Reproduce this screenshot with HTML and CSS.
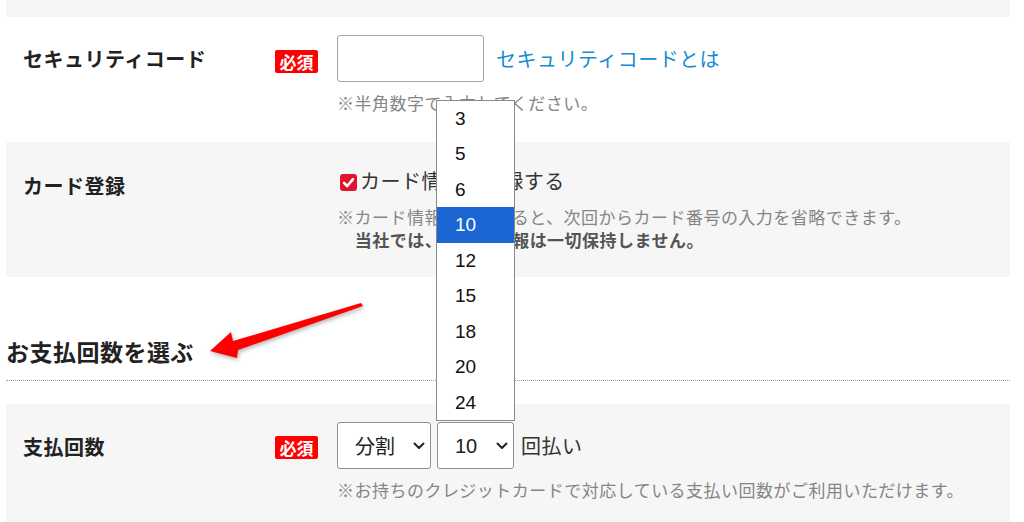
FILE: index.html
```html
<!DOCTYPE html>
<html lang="ja">
<head>
  <meta charset="UTF-8">
  <meta name="viewport" content="width=device-width, initial-scale=1.0">
  <title>お支払い情報</title>
  <link rel="stylesheet" href="styles.css">
</head>
<body>

<div class="page">
  <div class="row-top"></div>

  <!-- セキュリティコード -->
  <div class="row row-code">
    <div class="row-label">セキュリティコード</div>
    <div class="row-badge"><span class="badge">必須</span></div>
    <div class="row-field">
      <div class="field-line">
        <input type="text" class="text-input" name="code">
        <a href="#" class="link">セキュリティコードとは</a>
      </div>
      <p class="note">※半角数字で入力してください。</p>
    </div>
  </div>

  <!-- カード登録 -->
  <div class="row row-gray row-card">
    <div class="row-label">カード登録</div>
    <div class="row-badge"></div>
    <div class="row-field">
      <label class="check">
        <span class="check-box">
          <svg width="17" height="17" viewBox="0 0 17 17">
            <rect x="0" y="0" width="17" height="17" rx="3" fill="#e3132d"/>
            <path d="M4 8.8 L7.2 12 L13 5.2" fill="none" stroke="#fff" stroke-width="2.6" stroke-linecap="round" stroke-linejoin="round"/>
          </svg>
        </span>
        カード情報を登録する
      </label>
      <p class="note">※カード情報を登録すると、次回からカード番号の入力を省略できます。<strong>当社では、カード情報は一切保持しません。</strong></p>
    </div>
  </div>

  <!-- 見出し -->
  <div class="section-head">
    <h2>お支払回数を選ぶ</h2>
    <svg class="arrow" width="170" height="72" viewBox="0 0 170 72">
      <polygon points="10,57 31,38 33,47 161,9 163,12 38,56 37,64" fill="#ff0000"/>
    </svg>
  </div>

  <!-- 支払回数 -->
  <div class="row row-gray row-pay">
    <div class="row-label">支払回数</div>
    <div class="row-badge"><span class="badge">必須</span></div>
    <div class="row-field">
      <div class="field-line field-line-pay">
        <div class="select-wrap select-type">
          <select class="select">
            <option>分割</option>
          </select>
          <svg class="chevron" width="12" height="8" viewBox="0 0 12 8">
            <path d="M1.5 1.5 L6 6 L10.5 1.5" fill="none" stroke="#222" stroke-width="2" stroke-linecap="round" stroke-linejoin="round"/>
          </svg>
        </div>
        <div class="select-wrap select-count">
          <select class="select">
            <option>10</option>
          </select>
          <svg class="chevron" width="12" height="8" viewBox="0 0 12 8">
            <path d="M1.5 1.5 L6 6 L10.5 1.5" fill="none" stroke="#222" stroke-width="2" stroke-linecap="round" stroke-linejoin="round"/>
          </svg>
          <ul class="dropdown">
            <li>3</li>
            <li>5</li>
            <li>6</li>
            <li class="selected">10</li>
            <li>12</li>
            <li>15</li>
            <li>18</li>
            <li>20</li>
            <li>24</li>
          </ul>
        </div>
        <span class="unit">回払い</span>
      </div>
      <p class="note">※お持ちのクレジットカードで対応している支払い回数がご利用いただけます。</p>
    </div>
  </div>
</div>

</body>
</html>
```

FILE: styles.css
```css
/* 全体 */
body {
  margin: 0;
  background: #fff;
  font-family: "Noto Sans CJK JP", sans-serif;
  color: #333;
  letter-spacing: 0.03em;
  overflow: hidden;
}

.page {
  margin: 0 14px 0 6px;
}

.row-top {
  height: 17px;
  background: #f6f6f6;
}

/* 行 */
.row {
  display: grid;
  grid-template-columns: 252px 62px 1fr;
  padding-left: 17px;
}

.row-gray {
  background: #f6f6f6;
}

.row-label {
  font-size: 20px;
  font-weight: bold;
  color: #222;
  line-height: 30px;
}

.badge {
  display: inline-block;
  width: 43px;
  height: 23px;
  line-height: 23px;
  text-align: center;
  background: #ff0000;
  color: #fff;
  font-size: 17px;
  font-weight: bold;
  letter-spacing: 0;
  border-radius: 2px;
}

.field-line {
  display: flex;
  align-items: center;
  gap: 12px;
}

.note {
  margin: 9px 0 0;
  font-size: 17px;
  line-height: 23px;
  color: #858585;
}

.note strong {
  display: block;
  padding-left: 1.05em;
  color: #555;
}

/* セキュリティコード */
.row-code {
  padding-top: 18px;
  padding-bottom: 28px;
}

.row-code .row-label {
  padding-top: 9px;
}

.row-code .badge {
  margin-top: 15px;
}

.text-input {
  box-sizing: border-box;
  width: 147px;
  height: 47px;
  margin: 0;
  border: 1px solid #a5a5a5;
  border-radius: 3px;
  background: #fff;
}

.link {
  font-size: 20px;
  color: #168bd2;
  text-decoration: none;
  line-height: 30px;
}

/* カード登録 */
.row-card {
  padding-top: 24px;
  padding-bottom: 26px;
}

.row-card .row-label {
  padding-top: 5px;
}

.check {
  display: flex;
  align-items: center;
  gap: 3px;
  margin-left: 3px;
  font-size: 20px;
  line-height: 30px;
  color: #333;
}

.check-box {
  display: flex;
  padding-top: 2px;
}

/* 見出し */
.section-head {
  position: relative;
  margin-top: 58px;
  padding-bottom: 13px;
  border-bottom: 1px dotted #9a9a9a;
  margin-bottom: 23px;
}

.section-head h2 {
  margin: 0;
  font-size: 23px;
  line-height: 32px;
  color: #222;
}

.arrow {
  position: absolute;
  left: 194px;
  top: -41px;
  filter: drop-shadow(1px 2px 2px rgba(0, 0, 0, 0.3));
}

/* 支払回数 */
.row-pay {
  padding-top: 18px;
  padding-bottom: 40px;
}

.row-pay .row-label {
  padding-top: 10px;
}

.row-pay .badge {
  margin-top: 14px;
}

.field-line-pay {
  gap: 6px;
}

.select-wrap {
  position: relative;
}

.select {
  appearance: none;
  -webkit-appearance: none;
  box-sizing: border-box;
  height: 47px;
  margin: 0;
  padding: 0 0 0 17px;
  border: 1px solid #8f8f8f;
  border-radius: 3px;
  background: #fff;
  font-family: "Noto Sans CJK JP", sans-serif;
  font-size: 20px;
  color: #222;
}

.select-type .select {
  width: 94px;
}

.select-count .select {
  width: 77px;
  font-family: "Liberation Sans", Arial, sans-serif;
}

.chevron {
  position: absolute;
  right: 6px;
  top: 20px;
  pointer-events: none;
}

.unit {
  margin-left: 1px;
  font-size: 20px;
  color: #333;
}

/* 開いたプルダウン */
.dropdown {
  position: absolute;
  left: -1px;
  bottom: calc(100% + 1px);
  width: 77px;
  margin: 0;
  padding: 0;
  list-style: none;
  background: #fff;
  border: 1px solid #8a8a8a;
  font-family: "Liberation Sans", Arial, sans-serif;
  font-size: 19px;
  color: #111;
  letter-spacing: 0;
}

.dropdown li {
  height: 35.5px;
  line-height: 35.5px;
  padding-left: 18px;
}

.dropdown .selected {
  background: #1b66d2;
  color: #fff;
}
```
